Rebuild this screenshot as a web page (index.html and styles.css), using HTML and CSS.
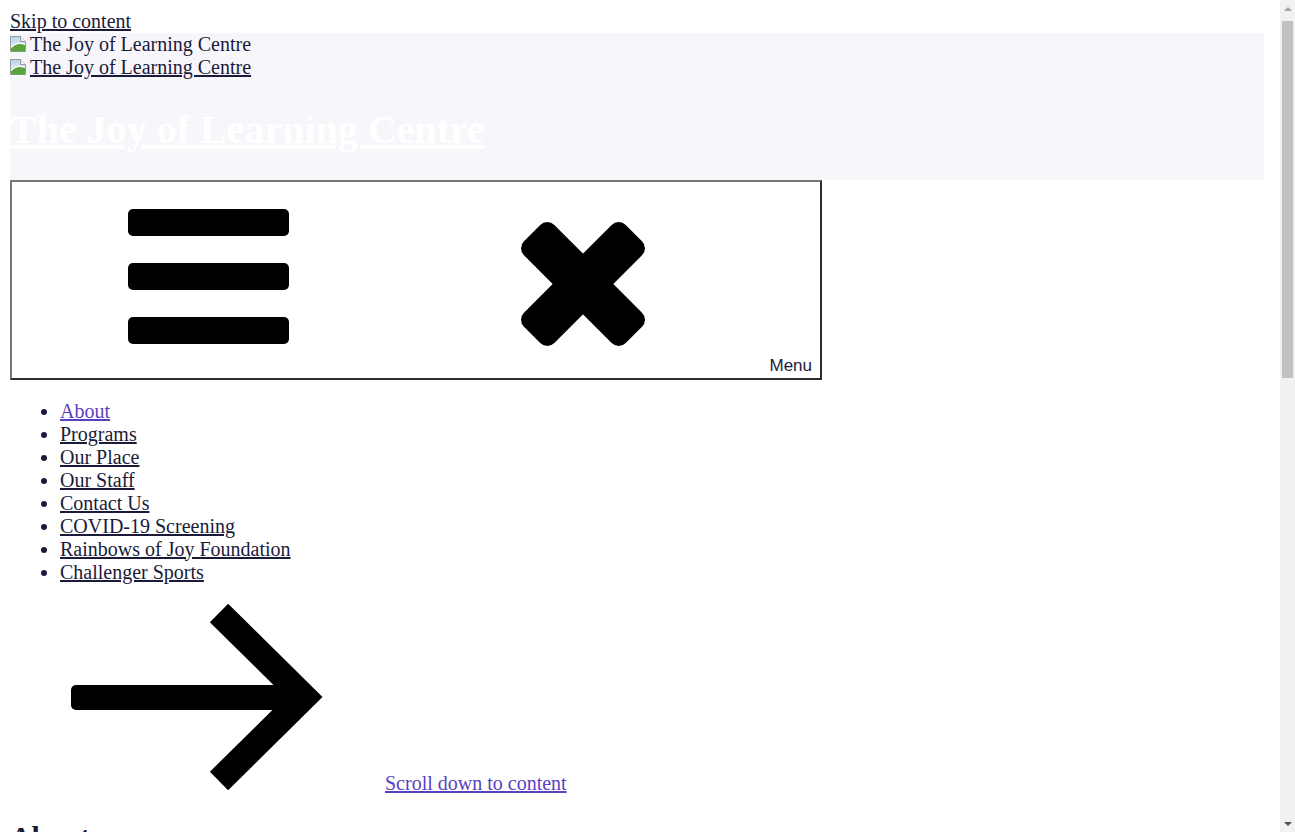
FILE: index.html
```html
<!DOCTYPE html>
<html lang="en">
<head>
<meta charset="utf-8">
<title>About – The Joy of Learning Centre</title>
<link rel="stylesheet" href="styles.css">
</head>
<body>
<a class="skip-link" href="#content">Skip to content</a>
<header class="site-header">
  <div class="logo-line"><svg class="broken-img" width="16" height="16" viewBox="0 0 16 16" aria-hidden="true"><defs><linearGradient id="sky" x1="0" y1="0" x2="0" y2="1"><stop offset="0" stop-color="#b9d3ee"/><stop offset="1" stop-color="#eef4fb"/></linearGradient></defs><path d="M0.5 0.5h10l5 5v10h-15z" fill="url(#sky)" stroke="#9a9a9a"/><path d="M10.5 0.5v5h5" fill="#f4f4f4" stroke="#9a9a9a"/><path d="M1 15.5v-4c4-4 9-5 14-3v7z" fill="#59a53a"/><path d="M1 11.5c4-4 9-5 14-3" fill="none" stroke="#ffffff" stroke-width="1.2"/></svg>The Joy of Learning Centre</div>
  <div class="logo-line"><a class="logo-link" href="#"><svg class="broken-img" width="16" height="16" viewBox="0 0 16 16" aria-hidden="true"><path d="M0.5 0.5h10l5 5v10h-15z" fill="url(#sky)" stroke="#9a9a9a"/><path d="M10.5 0.5v5h5" fill="#f4f4f4" stroke="#9a9a9a"/><path d="M1 15.5v-4c4-4 9-5 14-3v7z" fill="#59a53a"/><path d="M1 11.5c4-4 9-5 14-3" fill="none" stroke="#ffffff" stroke-width="1.2"/></svg>The Joy of Learning Centre</a></div>
  <h1 class="site-title"><a href="#">The Joy of Learning Centre</a></h1>
</header>
<button class="menu-toggle" type="button">
  <svg class="menu-icon" width="392" height="196" viewBox="0 0 392 196" aria-hidden="true">
    <rect x="116" y="27" width="161" height="27" rx="5"/>
    <rect x="116" y="81" width="161" height="27" rx="5"/>
    <rect x="116" y="135" width="161" height="27" rx="5"/>
  </svg>
  <svg class="menu-icon" width="354" height="196" viewBox="0 0 354 196" aria-hidden="true">
    <rect x="107" y="80.5" width="144" height="43" rx="10" transform="rotate(45 179 102)"/>
    <rect x="107" y="80.5" width="144" height="43" rx="10" transform="rotate(-45 179 102)"/>
  </svg>
  <span class="menu-label">Menu</span>
</button>
<nav class="main-nav">
  <ul class="nav-list">
    <li><a class="current" href="#">About</a></li>
    <li><a href="#">Programs</a></li>
    <li><a href="#">Our Place</a></li>
    <li><a href="#">Our Staff</a></li>
    <li><a href="#">Contact Us</a></li>
    <li><a href="#">COVID-19 Screening</a></li>
    <li><a href="#">Rainbows of Joy Foundation</a></li>
    <li><a href="#">Challenger Sports</a></li>
  </ul>
</nav>
<div class="scroll-line"><svg class="scroll-arrow" width="370" height="186" viewBox="0 0 370 186" aria-hidden="true"><rect x="61" y="81" width="229" height="25" rx="5"/><polyline points="209,9 294,93 209,177" fill="none" stroke="#000" stroke-width="26" stroke-linejoin="miter"/></svg> <a class="scroll-link" href="#content">Scroll down to content</a></div>
<main id="content" class="content">
  <h2 class="page-title">About</h2>
  <p>The Joy of Learning Centre offers a warm, play-based environment where children grow, explore and discover the joy of learning every day.</p>
</main>
<div class="scrollbar" aria-hidden="true">
  <span class="scrollbar-btn up"></span>
  <span class="scrollbar-track"><span class="scrollbar-thumb"></span></span>
  <span class="scrollbar-btn down"></span>
</div>
</body>
</html>
```
FILE: styles.css
```css
html {
  font-family: "Liberation Serif", "Times New Roman", serif;
  font-size: 20px;
  color: #1b1a3a;
  padding-right: 15px;
}

body {
  margin: 10px;
}

a {
  color: #1b1a3a;
}

.skip-link {
  color: #1b1a3a;
}

.site-header {
  display: flow-root;
  background: #f7f7fb;
  margin-right: 6px;
}

.broken-img {
  vertical-align: baseline;
  margin-right: 4px;
  margin-bottom: -1px;
}

.logo-link {
  color: #1b1a3a;
}

.site-title {
  font-size: 40px;
  font-weight: bold;
  margin: 26.8px 0;
}

.site-title a {
  color: #ffffff;
}

.menu-toggle {
  display: grid;
  grid-template-columns: 392px 354px 1fr;
  align-items: end;
  width: 812px;
  height: 200px;
  box-sizing: border-box;
  margin: 0;
  padding: 0;
  background: #ffffff;
  border: 2px solid;
  border-color: #767676 #2d2d2d #2d2d2d #767676;
  cursor: pointer;
}

.menu-icon {
  display: block;
  align-self: start;
}

.menu-label {
  justify-self: end;
  padding: 0 8px 2px 0;
  font-family: "Liberation Sans", Arial, sans-serif;
  font-size: 17px;
  color: #1b1a3a;
}

.nav-list {
  margin: 20px 0;
  padding-left: 50px;
  list-style: disc;
}

.nav-list a.current {
  color: #5a3fc2;
}

.scroll-arrow {
  vertical-align: baseline;
}

.scroll-link {
  color: #5a3fc2;
}

.content {
  min-height: 1050px;
}

.page-title {
  font-size: 30px;
  margin: 25px 0;
}

/* classic browser scrollbar drawn over the right edge */
.scrollbar {
  position: fixed;
  top: 0;
  right: 0;
  bottom: 0;
  width: 15px;
  display: flex;
  flex-direction: column;
  background: #f1f1f1;
}

.scrollbar-btn {
  flex: 0 0 17px;
  display: flex;
  justify-content: center;
  align-items: center;
}

.scrollbar-btn::before {
  content: "";
  width: 0;
  height: 0;
  border-left: 4px solid transparent;
  border-right: 4px solid transparent;
}

.scrollbar-btn.up::before {
  border-bottom: 4px solid #a3a3a3;
}

.scrollbar-btn.down::before {
  border-top: 4px solid #505050;
}

.scrollbar-track {
  flex: 1;
  padding: 4px 2px 0;
}

.scrollbar-thumb {
  display: block;
  height: 357px;
  background: #c1c1c1;
}
```
